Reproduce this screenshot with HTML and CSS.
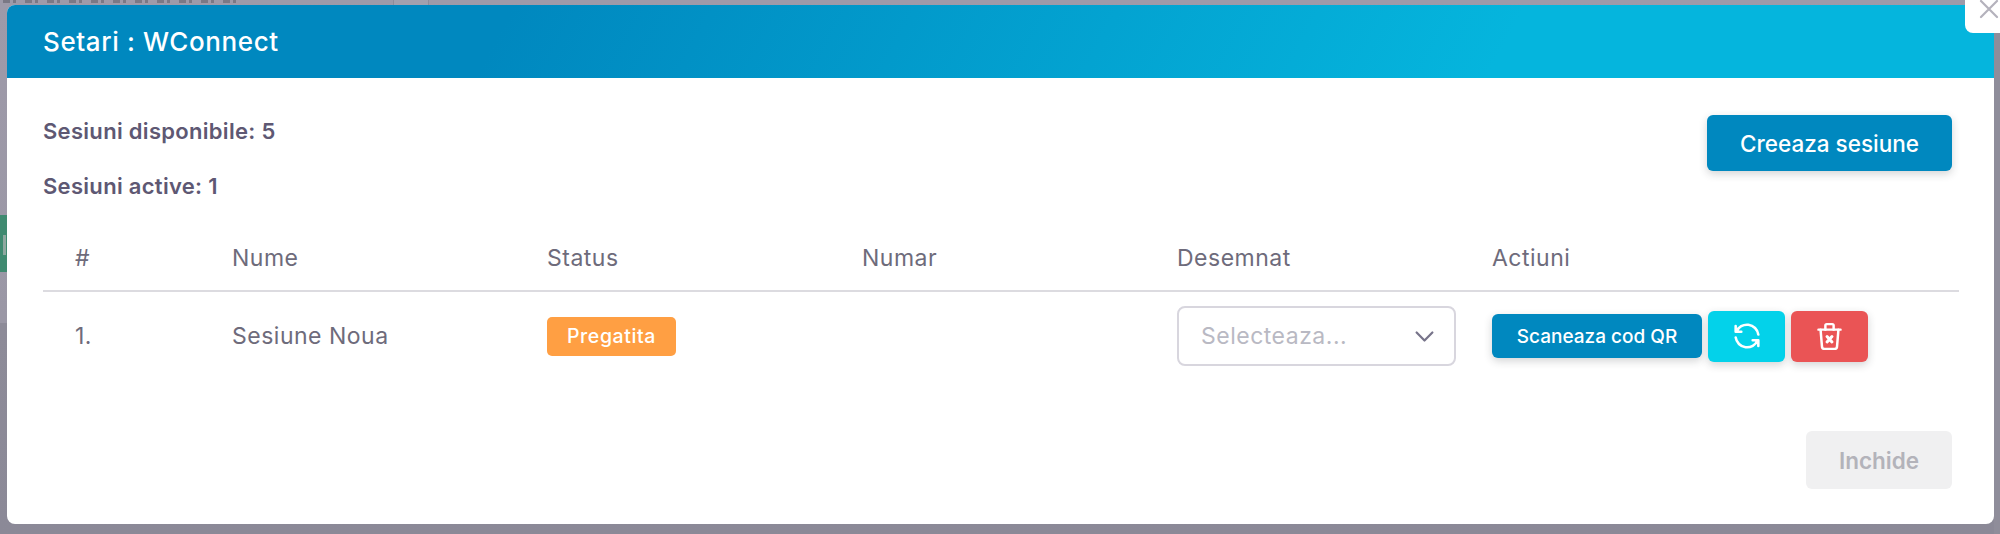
FILE: index.html
```html
<!DOCTYPE html>
<html lang="ro">
<head>
  <meta charset="UTF-8" />
  <title>Setari : WConnect</title>
  <link rel="stylesheet" href="styles.css">
</head>
<body>
  <div class="behind">
    <div class="behind-text"></div>
    <div class="behind-column"></div>
    <div class="behind-green"></div>
  </div>

  <div class="modal">
    <button class="close">
      <svg width="22" height="22" viewBox="0 0 22 22" fill="none" stroke="#b4b2bc" stroke-width="2.2" stroke-linecap="round"><path d="M3 3l16 16M19 3L3 19"/></svg>
    </button>
    <div class="modal-header">Setari : WConnect</div>
    <div class="modal-body">
      <div class="summary">
        <div>
          <p class="stat">Sesiuni disponibile: 5</p>
          <p class="stat">Sesiuni active: 1</p>
        </div>
        <button class="btn btn-create">Creeaza sesiune</button>
      </div>

      <table class="sessions">
        <thead>
          <tr>
            <th class="col-nr">#</th>
            <th class="col-wide">Nume</th>
            <th class="col-wide">Status</th>
            <th class="col-wide">Numar</th>
            <th class="col-wide">Desemnat</th>
            <th>Actiuni</th>
          </tr>
        </thead>
        <tbody>
          <tr>
            <td>1.</td>
            <td>Sesiune Noua</td>
            <td><span class="badge">Pregatita</span></td>
            <td></td>
            <td>
              <div class="select">
                <span>Selecteaza...</span>
                <svg width="27" height="27" viewBox="0 0 24 24" fill="none" stroke="#77748a" stroke-width="2" stroke-linecap="round" stroke-linejoin="round"><path d="M5 8.5l7 7 7-7"/></svg>
              </div>
            </td>
            <td>
              <div class="actions">
                <button class="btn btn-qr">Scaneaza cod QR</button>
                <button class="btn btn-icon btn-refresh">
                  <svg width="34" height="34" viewBox="0 0 24 24" fill="none" stroke="#fff" stroke-width="1.8" stroke-linecap="round" stroke-linejoin="round"><path d="M20 11A8.1 8.1 0 0 0 4.5 9M4 5v4h4"/><path d="M4 13a8.1 8.1 0 0 0 15.5 2m.5 4v-4h-4"/></svg>
                </button>
                <button class="btn btn-icon btn-delete">
                  <svg width="33" height="33" viewBox="0 0 24 24" fill="none" stroke="#fff" stroke-width="1.8" stroke-linecap="round" stroke-linejoin="round"><path d="M4 7h16"/><path d="M5.5 7l1 12a2 2 0 0 0 2 2h7a2 2 0 0 0 2-2l1-12"/><path d="M9 7V4a1 1 0 0 1 1-1h4a1 1 0 0 1 1 1v3"/><path d="M10.2 12l3.6 4m0-4l-3.6 4" stroke-width="2.2"/></svg>
                </button>
              </div>
            </td>
          </tr>
        </tbody>
      </table>

      <div class="modal-footer">
        <button class="btn btn-close">Inchide</button>
      </div>
    </div>
  </div>
</body>
</html>
```

FILE: styles.css
```css
* {
  box-sizing: border-box;
}
html, body {
  height: 100%;
}
body {
  margin: 0;
  overflow: hidden;
  font-family: Inter, "Noto Sans", sans-serif;
  color: #6e6b7b;
  background:
    linear-gradient(90deg, transparent 1994px, #8f8d9a 1994px),
    linear-gradient(180deg, #9e9aa9 0, #9a97a5 323px, #8d8b98 323px, #8b8997 100%);
}
button {
  font-family: inherit;
  border: none;
}

/* page dimmed behind the modal */
.behind-text {
  position: absolute;
  top: 0;
  left: 3px;
  width: 234px;
  height: 3px;
  background: repeating-linear-gradient(90deg, #7a7885 0 7px, #9e9aa9 7px 10px, #7a7885 10px 13px, #9e9aa9 13px 22px);
}
.behind-column {
  position: absolute;
  top: 0;
  left: 393px;
  width: 36px;
  height: 5px;
  background: #a3a0ae;
  border-left: 1px solid #8f8c9a;
  border-right: 1px solid #8f8c9a;
}
.behind-green {
  position: absolute;
  top: 215px;
  left: 0;
  width: 7px;
  height: 57px;
  background: #3f8a70;
}
.behind-green::after {
  content: "";
  position: absolute;
  top: 20px;
  left: 3px;
  width: 3px;
  height: 20px;
  background: #8fa8a0;
}

.modal {
  position: absolute;
  top: 5px;
  left: 7px;
  width: 1987px;
  height: 519px;
  background: #fff;
  border-radius: 8px;
}
.close {
  position: absolute;
  top: -5px;
  right: -6px;
  width: 35px;
  height: 33px;
  padding: 0 0 0 13px;
  background: #fff;
  border-radius: 0 0 0 8px;
  display: flex;
  align-items: flex-start;
  justify-content: flex-start;
}
.close svg {
  margin-top: -2px;
}
.modal-header {
  height: 73px;
  padding: 0 36px;
  display: flex;
  align-items: center;
  font-size: 26px;
  font-weight: 500;
  letter-spacing: 0.6px;
  color: #fff;
  border-radius: 8px 8px 0 0;
  background: linear-gradient(118deg, #0088bf 0%, #0088bf 25%, #05b5dd 75%, #05b5dd 100%);
}
.modal-body {
  padding: 0 35px 0 36px;
}

.summary {
  display: flex;
  justify-content: space-between;
  align-items: flex-start;
  padding-top: 41px;
  padding-right: 7px;
}
.stat {
  margin: 0 0 30px;
  font-size: 22px;
  font-weight: 600;
  letter-spacing: 0.3px;
  line-height: 25px;
  color: #5e5873;
}

.btn {
  color: #fff;
  font-weight: 500;
  border-radius: 6px;
  box-shadow: 0 3px 8px rgba(34, 41, 47, 0.2);
}
.btn-create {
  width: 245px;
  height: 56px;
  margin-top: -4px;
  font-size: 22.5px;
  background: #0088bf;
}

.sessions {
  width: 100%;
  table-layout: fixed;
  border-collapse: collapse;
  margin-top: 15px;
  font-size: 23px;
  letter-spacing: 0.5px;
}
.sessions th {
  padding: 0 0 18px 0;
  text-align: left;
  font-weight: 400;
  border-bottom: 2px solid #dcdbe0;
}
.sessions td {
  padding: 14px 0 15px 0;
  vertical-align: middle;
}
.sessions th:first-child,
.sessions td:first-child {
  padding-left: 32px;
}
.col-nr {
  width: 189px;
}
.col-wide {
  width: 315px;
}

.badge {
  display: inline-block;
  width: 129px;
  height: 39px;
  line-height: 39px;
  text-align: center;
  font-size: 19.5px;
  font-weight: 500;
  letter-spacing: 0.6px;
  color: #fff;
  background: #ff9f43;
  border-radius: 5px;
}

.select {
  width: 279px;
  height: 60px;
  padding: 0 16px 0 22px;
  display: flex;
  align-items: center;
  justify-content: space-between;
  color: #b9b9c3;
  border: 2px solid #d8d6de;
  border-radius: 8px;
}

.actions {
  display: flex;
  align-items: center;
  gap: 6px;
}
.btn-qr {
  width: 210px;
  height: 44px;
  font-size: 19px;
  background: #0088bf;
}
.btn-icon {
  width: 77px;
  height: 51px;
  padding: 0;
  display: flex;
  align-items: center;
  justify-content: center;
}
.btn-refresh {
  background: #03d2ea;
}
.btn-delete {
  background: #ea5455;
}

.modal-footer {
  display: flex;
  justify-content: flex-end;
  padding: 50px 7px 0 0;
}
.btn-close {
  width: 146px;
  height: 58px;
  font-size: 22.5px;
  font-weight: 600;
  color: #b3b3ba;
  background: #f0f0f1;
  box-shadow: none;
}
```
